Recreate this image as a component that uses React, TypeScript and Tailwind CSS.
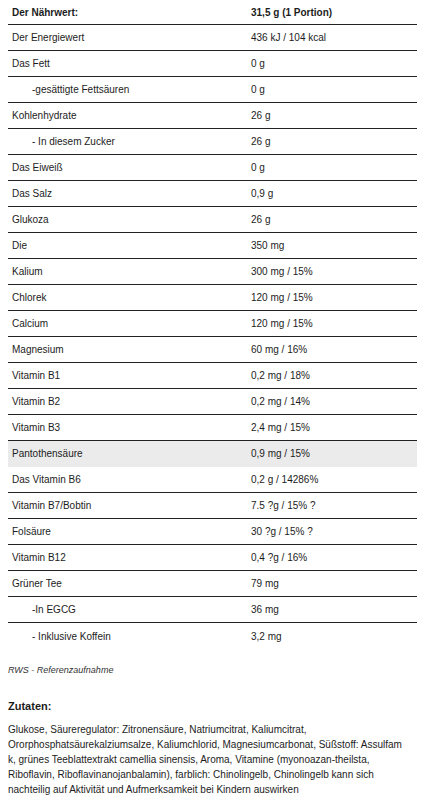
import React from "react";

type Row = { label: string; value: string; indent?: boolean; highlight?: boolean };

const rows: Row[] = [
  { label: "Der Energiewert", value: "436 kJ / 104 kcal" },
  { label: "Das Fett", value: "0 g" },
  { label: "-gesättigte Fettsäuren", value: "0 g", indent: true },
  { label: "Kohlenhydrate", value: "26 g" },
  { label: "- In diesem Zucker", value: "26 g", indent: true },
  { label: "Das Eiweiß", value: "0 g" },
  { label: "Das Salz", value: "0,9 g" },
  { label: "Glukoza", value: "26 g" },
  { label: "Die", value: "350 mg" },
  { label: "Kalium", value: "300 mg / 15%" },
  { label: "Chlorek", value: "120 mg / 15%" },
  { label: "Calcium", value: "120 mg / 15%" },
  { label: "Magnesium", value: "60 mg / 16%" },
  { label: "Vitamin B1", value: "0,2 mg / 18%" },
  { label: "Vitamin B2", value: "0,2 mg / 14%" },
  { label: "Vitamin B3", value: "2,4 mg / 15%" },
  { label: "Pantothensäure", value: "0,9 mg / 15%", highlight: true },
  { label: "Das Vitamin B6", value: "0,2 g / 14286%" },
  { label: "Vitamin B7/Bobtin", value: "7.5 ?g / 15% ?" },
  { label: "Folsäure", value: "30 ?g / 15% ?" },
  { label: "Vitamin B12", value: "0,4 ?g / 16%" },
  { label: "Grüner Tee", value: "79 mg" },
  { label: "-In EGCG", value: "36 mg", indent: true },
  { label: "- Inklusive Koffein", value: "3,2 mg", indent: true },
];

export default function App() {
  return (
    <div
      className="w-[425px] bg-white px-[8px] text-[10px] text-[#1c1c1c]"
      style={{ fontFamily: '"Liberation Sans", Arial, sans-serif' }}
    >
      <div className="flex flex-col">
        <div className="grid h-[25px] grid-cols-[239px_1fr] items-center border-b border-[#222] font-bold">
          <div className="pl-[4px]">Der Nährwert:</div>
          <div className="pl-[4px]">31,5 g (1 Portion)</div>
        </div>
        {rows.map((r, i) => {
          const last = i === rows.length - 1;
          const border = last ? "" : r.highlight ? "border-b border-[#ebebeb]" : "border-b border-[#222]";
          return (
            <div
              key={i}
              className={`grid h-[26px] grid-cols-[239px_1fr] items-center ${border} ${r.highlight ? "bg-[#ebebeb]" : ""}`}
            >
              <div className={r.indent ? "pl-[24px]" : "pl-[4px]"}>{r.label}</div>
              <div className="pl-[4px]">{r.value}</div>
            </div>
          );
        })}
      </div>
      <div className="mt-[15px] text-[9px] italic text-[#333]">RWS - Referenzaufnahme</div>
      <div className="mt-[20px] text-[11px] font-bold">Zutaten:</div>
      <p className="mt-[8px] leading-[15px]">
        Glukose, Säureregulator: Zitronensäure, Natriumcitrat, Kaliumcitrat,
        <br />
        Ororphosphatsäurekalziumsalze, Kaliumchlorid, Magnesiumcarbonat, Süßstoff: Assulfam
        <br />
        k, grünes Teeblattextrakt camellia sinensis, Aroma, Vitamine (myonoazan-theilsta,
        <br />
        Riboflavin, Riboflavinanojanbalamin), farblich: Chinolingelb, Chinolingelb kann sich
        <br />
        nachteilig auf Aktivität und Aufmerksamkeit bei Kindern auswirken
      </p>
    </div>
  );
}
